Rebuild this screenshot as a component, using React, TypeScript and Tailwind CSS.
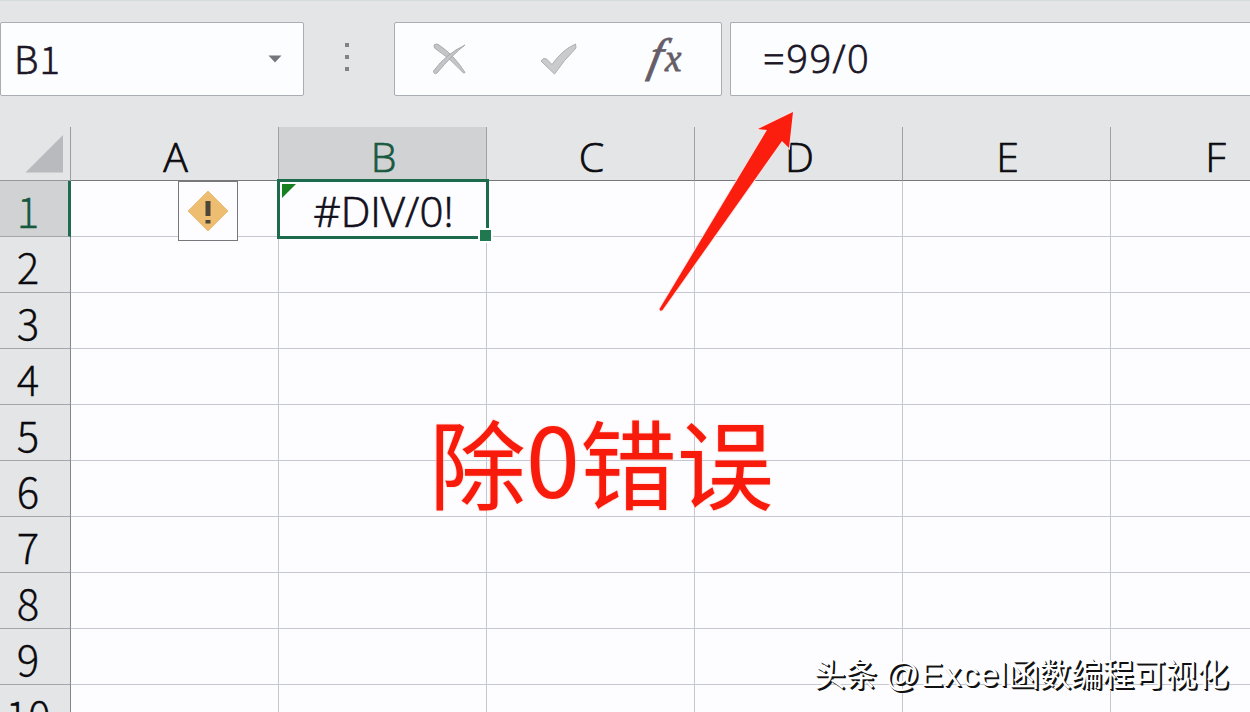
import { useState } from 'react';
import clsx from 'clsx';

const COLUMNS = ['A', 'B', 'C', 'D', 'E', 'F'];
const ROWS = [1, 2, 3, 4, 5, 6, 7, 8, 9, 10];

const CELLS: Record<string, string> = {
  B1: '#DIV/0!',
};

const FORMULAS: Record<string, string> = {
  B1: '=99/0',
};

function CancelIcon() {
  return (
    <svg width="36" height="34" viewBox="0 0 36 34" fill="#c3c5c8" stroke="#a9abae" strokeWidth="1">
      <path d="M2 3 Q4 1 7 3 Q22 13 33 30.500 Q32 32 30 29.500 Q17 15 2.500 6 Z" />
      <path d="M1.500 29 Q14 12 33 3 Q20 13 5 31 Q2 33 1.500 29 Z" />
    </svg>
  );
}

function EnterIcon() {
  return (
    <svg width="40" height="34" viewBox="0 0 40 34" fill="#c9cbcd" stroke="#adafb1" strokeWidth="1">
      <path d="M2 19 Q4 15 7.500 17 L13 22.500 Q23 8 36.500 2 L37 6 Q25 18 15.500 32 Z" />
    </svg>
  );
}

function FormulaBar({ active }: { active: string }) {
  return (
    <div className="flex h-[127px] w-full shrink-0 items-start border-t border-[#d3dbdd] bg-[#e4e5e7] pt-[21px]">
      {/* Name box */}
      <div className="flex h-[74px] w-[304px] shrink-0 items-center justify-between rounded-[2px] border border-[#a9adb4] bg-[#fcfdff] pr-[21px] pl-[13px]">
        <span className="pb-[2px] text-[38px] leading-none font-light tracking-[1px] text-[#1c1726] [-webkit-text-stroke:0.6px_#1c1726]">
          {active}
        </span>
        <svg width="14" height="8" viewBox="0 0 14 8">
          <path d="M0.500 0.500 H13.500 L7 7.500 Z" fill="#77757c" />
        </svg>
      </div>

      {/* Drag grip */}
      <div className="flex h-[74px] w-[90px] shrink-0 flex-col items-center justify-center gap-2 pr-1 pb-1">
        <i className="size-1 bg-[#828387]" />
        <i className="size-1 bg-[#828387]" />
        <i className="size-1 bg-[#828387]" />
      </div>

      <div className="flex h-[74px] w-[328px] shrink-0 items-center rounded-[2px] border border-[#a9adb4] bg-[#fcfdff] pl-[37px]">
        <button type="button" title="Cancel">
          <CancelIcon />
        </button>
        <button type="button" title="Enter" className="ml-[71px]">
          <EnterIcon />
        </button>
        <button
          type="button"
          title="Insert Function"
          className="ml-[71px] flex items-baseline pb-2 font-['Liberation_Serif',serif] leading-none text-[#665d68] italic [-webkit-text-stroke:0.8px_#665d68]"
        >
          <span className="inline-block -skew-x-12 text-[47px] leading-none">f</span>
          <span className="ml-0.5 text-[37px] leading-none">x</span>
        </button>
      </div>

      <div className="ml-2 flex h-[74px] flex-1 items-center rounded-l-[2px] border border-r-0 border-[#a9adb4] bg-[#fcfdff] pl-[32px]">
        <span className="pb-[3px] font-['Open_Sans',sans-serif] text-[38px] leading-none font-light tracking-[1.500px] text-[#1c1726] [-webkit-text-stroke:0.8px_#1c1726]">
          {FORMULAS[active]}
        </span>
      </div>
    </div>
  );
}

function ErrorBadge() {
  return (
    <div className="absolute top-0 right-[40px] z-10 flex h-[60px] w-[60px] items-center justify-center border border-[#77777d] bg-[#fdfdff]">
      <svg width="42" height="42" viewBox="0 0 42 42">
        <path d="M21 1 L41 21 L21 41 L1 21 Z" fill="#edbd71" stroke="#edbd71" strokeLinejoin="round" />
        <rect x="18.500" y="11" width="5" height="15" fill="#4d4638" />
        <rect x="18.500" y="30" width="5" height="3.500" fill="#4d4638" />
      </svg>
    </div>
  );
}

function Selection() {
  return (
    <>
      <div className="absolute -top-[2px] -right-[3px] -bottom-[3px] -left-[2px] z-10 border-3 border-[#1b6b4c]" />
      <svg className="absolute top-[3px] left-[3px]" width="14" height="14" viewBox="0 0 14 14">
        <path d="M0 0 H14 L0 14 Z" fill="#178020" />
      </svg>
      <div className="absolute -right-[7px] -bottom-[7px] z-20 size-[15px] border-2 border-[#fdfdff] bg-[#1f7850]" />
    </>
  );
}

export default function App() {
  const [active, setActive] = useState('B1');
  const activeColumn = active[0];
  const activeRow = Number(active.slice(1));

  return (
    <div className="relative flex h-[712px] w-[1250px] flex-col overflow-hidden bg-[#fdfdff] font-['Noto_Sans_CJK_SC',sans-serif]">
      <FormulaBar active={active} />

      {/* Column headers */}
      <div className="grid h-[54px] shrink-0 grid-cols-[71px_repeat(6,208px)] bg-[#e4e5e7]">
        <div className="flex items-end justify-end border-r border-b border-r-[#9b9ca0] border-b-[#96979b] pr-[7px] pb-[7px]">
          <svg width="38" height="39" viewBox="0 0 38 39">
            <path d="M38 1 V38.500 H0.500 Z" fill="#b9babd" />
          </svg>
        </div>
        {COLUMNS.map((col) => (
          <div
            key={col}
            className={clsx(
              "flex items-center justify-center border-r border-b border-r-[#a0a1a6] border-b-[#77787c] pt-[5px] pl-0.5 font-['Open_Sans',sans-serif] text-[41px] leading-none font-light [-webkit-text-stroke:0.7px_currentColor]",
              col === activeColumn ? 'bg-[#d1d2d4] text-[#17593f]' : 'text-[#0b0b0f]'
            )}
          >
            {col}
          </div>
        ))}
      </div>

      {/* Rows */}
      {ROWS.map((row) => (
        <div key={row} className="grid h-14 shrink-0 grid-cols-[71px_repeat(6,208px)]">
          <div
            className={clsx(
              'flex items-center justify-center border-b border-b-[#a5a6ab] pt-0.5 text-[42px] leading-none font-light [-webkit-text-stroke:0.3px_currentColor]',
              row === activeRow
                ? 'border-r-3 border-r-[#1b6b4c] bg-[#d1d2d4] pr-3 text-[#17593f]'
                : 'border-r border-r-[#85868b] bg-[#e4e5e7] pr-3.5 text-[#0b0b0f]'
            )}
          >
            {row}
          </div>
          {COLUMNS.map((col) => {
            const id = `${col}${row}`;
            return (
              <div
                key={id}
                onClick={() => setActive(id)}
                className="relative flex items-center justify-center border-r border-b border-[#c5c8d0] pt-[5px] pl-0.5 font-['Open_Sans',sans-serif] text-[42px] leading-none font-light text-[#13101c] [-webkit-text-stroke:0.7px_#13101c]"
              >
                {CELLS[id]}
                {id === 'A1' && <ErrorBadge />}
                {id === active && <Selection />}
              </div>
            );
          })}
        </div>
      ))}

      {/* Annotations over the sheet */}
      <svg className="absolute top-[108px] left-[654px] z-30" width="144" height="208" viewBox="654 108 144 208">
        <path
          d="M793 112 L758 129 L767 130 L659.500 309 Q660 312 662.500 310 L782 141 L789 148 Z"
          fill="#fb1d0e"
          stroke="#f6e4e4"
          strokeWidth="2"
          paintOrder="stroke"
        />
      </svg>
      <div className="absolute top-[411px] left-[429px] z-30 text-[97px] leading-none whitespace-nowrap text-[#f81b0c] [text-shadow:0_0_2px_#ffb5a8]">
        除<span className="relative -top-1">0</span>错误
      </div>
      <div className="absolute top-[657px] left-[814px] z-30 flex items-baseline text-[31.500px] leading-none whitespace-nowrap text-white [text-shadow:1px_1px_0_#111,2px_2px_0_#111]">
        <span>头条</span>
        <span className="ml-2 font-['Liberation_Sans',sans-serif] text-[34px] tracking-[0.9px]">@Excel</span>
        <span>函数编程可视化</span>
      </div>
    </div>
  );
}
